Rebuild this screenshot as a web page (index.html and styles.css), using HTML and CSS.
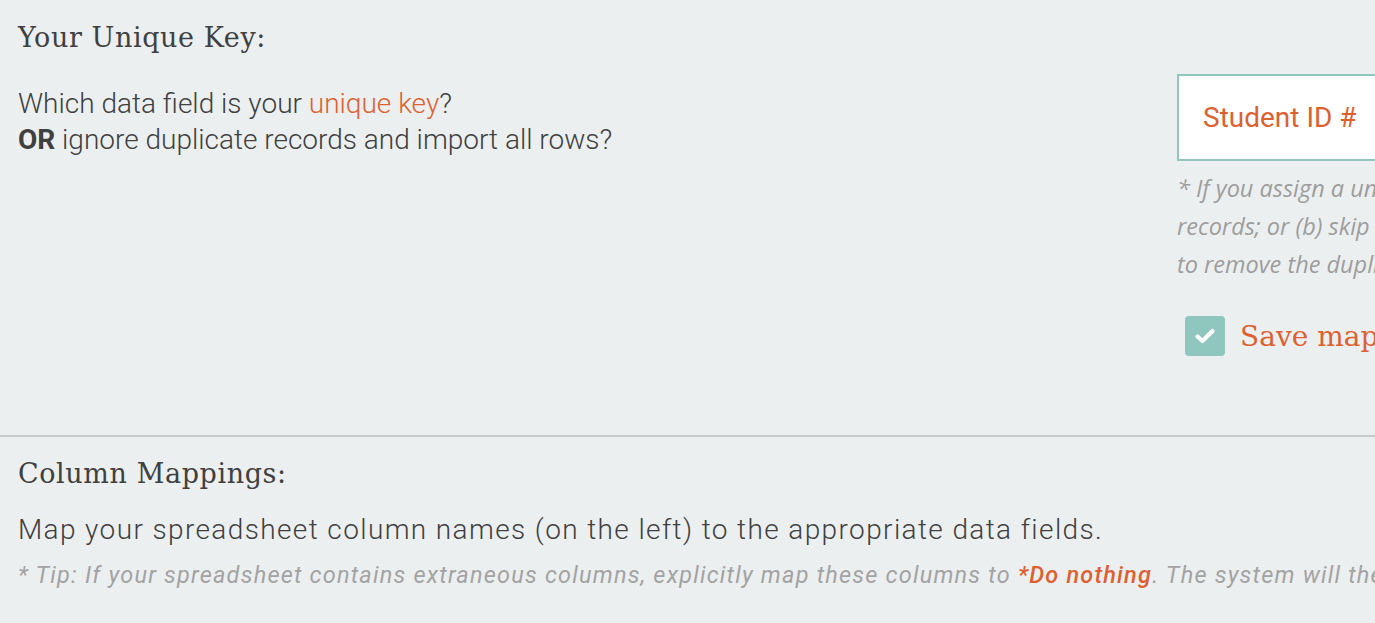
FILE: index.html
```html
<!DOCTYPE html>
<html lang="en">

<head>
    <meta charset="UTF-8">
    <meta name="viewport" content="width=device-width, initial-scale=1.0">
    <title>Import Settings</title>
    <link rel="stylesheet" href="styles.css">
</head>

<body>

    <div class="import-page">
        <section class="block unique-key">
            <h2 class="block-title">Your Unique Key:</h2>
            <div class="key-row">
                <p class="question">
                    Which data field is your <a href="#" class="accent">unique key</a>?<br>
                    <strong>OR</strong> ignore duplicate records and import all rows?
                </p>
                <div class="key-side">
                    <div class="key-select">Student ID #</div>
                    <p class="key-note">* If you assign a unique key, the system will (a) update existing<br>records; or (b) skip records that already exist. Otherwise, you may need<br>to remove the duplicates by hand after the import.</p>
                    <label class="save-map">
                        <span class="check">
                            <svg width="22" height="18" viewBox="0 0 22 18"><path d="M3.5 9.5 L8.5 14 L18.5 4" fill="none" stroke="#fff" stroke-width="4.2" stroke-linecap="round" stroke-linejoin="round"/></svg>
                        </span>
                        <span class="save-label">Save mapping for next import</span>
                    </label>
                </div>
            </div>
        </section>

        <section class="block mappings">
            <h2 class="block-title">Column Mappings:</h2>
            <p class="lead">Map your spreadsheet column names (on the left) to the appropriate data fields.</p>
            <p class="tip">* Tip: If your spreadsheet contains extraneous columns, explicitly map these columns to <span class="accent-strong">*Do nothing</span>. The system will then ignore those columns during the import.</p>
        </section>
    </div>

</body>

</html>
```

FILE: styles.css
```css
html, body {
    margin: 0;
    padding: 0;
    background-color: #eceff0;
    overflow: hidden;
}

body {
    font-family: Roboto, "Noto Sans", sans-serif;
    color: #404040;
}

.import-page {
    width: 2000px;
}

.block {
    padding: 0 18px;
}

.unique-key {
    padding-top: 22px;
    padding-bottom: 79px;
    border-bottom: 2px solid #c9caca;
}

.block-title {
    margin: 0;
    font-family: "DejaVu Serif", serif;
    font-weight: normal;
    font-size: 27px;
    line-height: 32px;
    letter-spacing: 0.6px;
    color: #404040;
}

.key-row {
    display: grid;
    grid-template-columns: 1159px 680px;
    margin-top: 20px;
}

.question {
    margin: 12px 0 0;
    font-size: 28px;
    font-weight: 300;
    line-height: 36px;
}

.question strong {
    font-weight: 700;
}

.accent {
    color: #dd6130;
    text-decoration: none;
}

.key-select {
    height: 87px;
    box-sizing: border-box;
    border: 2px solid #8fc7bf;
    background: #fff;
    padding: 0 24px;
    display: flex;
    align-items: center;
    font-size: 28px;
    color: #dd6130;
}

.key-note {
    margin: 8px 0 0;
    font-family: "Open Sans", Lato, sans-serif;
    font-style: italic;
    font-size: 23.5px;
    line-height: 38px;
    color: #9d9d9d;
    white-space: nowrap;
}

.save-map {
    display: flex;
    align-items: center;
    gap: 15px;
    margin: 33px 0 0 8px;
}

.check {
    width: 40px;
    height: 40px;
    border-radius: 4px;
    background: #8fc7bf;
    display: flex;
    align-items: center;
    justify-content: center;
}

.save-label {
    font-family: "DejaVu Serif", serif;
    font-size: 28px;
    color: #dd6130;
    white-space: nowrap;
}

.mappings {
    padding-top: 21px;
}

.lead {
    margin: 23px 0 0;
    font-size: 28px;
    line-height: 34px;
    font-weight: 300;
    letter-spacing: 1.38px;
}

.tip {
    margin: 14px 0 0;
    font-size: 23.5px;
    line-height: 28px;
    font-style: italic;
    font-weight: 400;
    letter-spacing: 1.2px;
    color: #a3a3a3;
    white-space: nowrap;
}

.accent-strong {
    color: #dd6130;
    font-weight: 500;
}
```
